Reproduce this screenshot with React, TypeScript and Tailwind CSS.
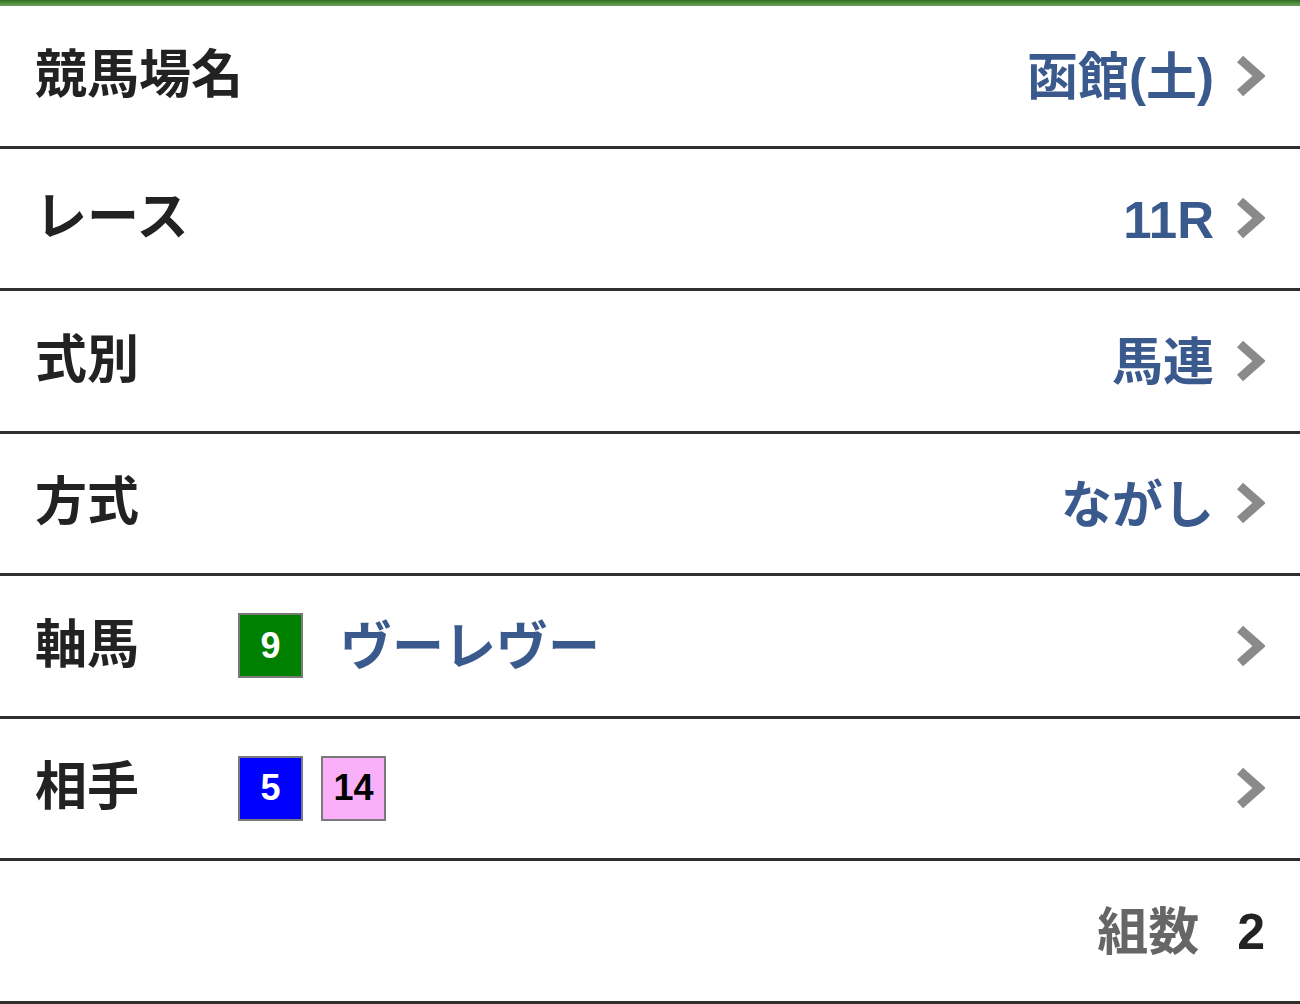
import React from "react";

const FONT = "font-['Liberation_Sans','Noto_Sans_CJK_JP',sans-serif]";

type RowProps = {
  label: string;
  children?: React.ReactNode;
  value?: string;
  chevron?: boolean;
};

function Chevron() {
  return (
    <svg width="28" height="42" viewBox="0 0 28 42" className="shrink-0">
      <polyline
        points="3,4 22,21 3,38"
        fill="none"
        stroke="#8a8a8a"
        strokeWidth="9"
        strokeLinejoin="miter"
      />
    </svg>
  );
}

function Badge({ num, bg, fg }: { num: string; bg: string; fg: string }) {
  return (
    <span
      className={`flex h-[65px] w-[65px] items-center justify-center border-2 border-[#7a7a7a] text-[36px] font-bold leading-none ${bg} ${fg}`}
    >
      {num}
    </span>
  );
}

function Row({ label, children, value, chevron = true }: RowProps) {
  return (
    <div className="flex h-[142.5px] items-center border-b-[3px] border-[#2f2f2f] pl-[35px] pr-[35px]">
      <span className="w-[203px] shrink-0 whitespace-nowrap pb-[2px] text-[52px] font-bold leading-none text-[#222]">
        {label}
      </span>
      <div className="flex flex-1 items-center">{children}</div>
      {value ? (
        <span className="mr-[23px] whitespace-nowrap pt-[4px] text-[51px] font-bold leading-none text-[#3a5a8e]">
          {value}
        </span>
      ) : null}
      {chevron ? <Chevron /> : null}
    </div>
  );
}

export default function App() {
  return (
    <div className={`min-h-[1004px] w-[1300px] bg-white ${FONT}`}>
      <div className="h-[6px] bg-[linear-gradient(#2f6a22,#4e8d3c,#6f9f5f)]" />
      <Row label="競馬場名" value="函館(土)" />
      <Row label="レース" value="11R" />
      <Row label="式別" value="馬連" />
      <Row label="方式" value="ながし" />
      <Row label="軸馬">
        <Badge num="9" bg="bg-[#008000]" fg="text-white" />
        <span className="ml-[37px] whitespace-nowrap pt-[2px] text-[52px] font-bold leading-none text-[#3a5a8e]">
          ヴーレヴー
        </span>
      </Row>
      <Row label="相手">
        <div className="flex gap-[18px]">
          <Badge num="5" bg="bg-[#0000ff]" fg="text-white" />
          <Badge num="14" bg="bg-[#f9b0f9]" fg="text-black" />
        </div>
      </Row>
      <div className="flex h-[142.5px] items-center justify-end border-b-[3px] border-[#2f2f2f] pr-[35px]">
        <span className="pt-[4px] text-[51px] font-bold leading-none text-[#666]">組数</span>
        <span className="ml-[38px] pt-[2px] text-[50px] font-bold leading-none text-[#222]">2</span>
      </div>
    </div>
  );
}
